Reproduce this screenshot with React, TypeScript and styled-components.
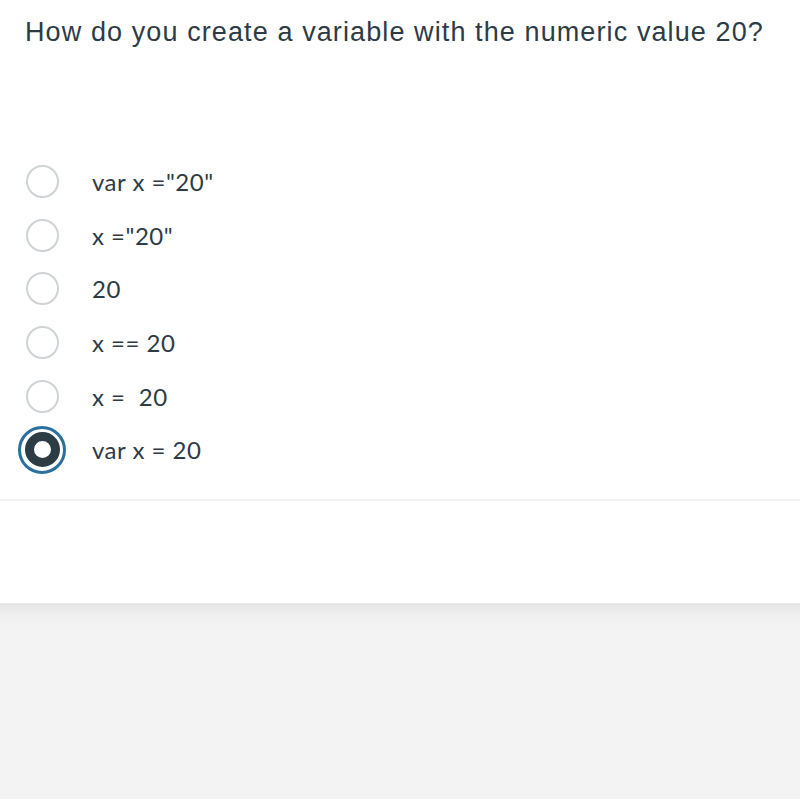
import React from "react";
import styled, { createGlobalStyle } from "styled-components";

const Global = createGlobalStyle`
  html, body { margin: 0; padding: 0; background: #ffffff; }
  body { font-family: "Liberation Sans", Arial, sans-serif; }
`;

const Page = styled.div`
  width: 800px;
  height: 799px;
  display: flex;
  flex-direction: column;
  background: #ffffff;
  overflow: hidden;
`;

const Card = styled.div`
  height: 501px;
  display: flex;
  flex-direction: column;
  border-bottom: 2px solid #f2f2f2;
  box-sizing: border-box;
`;

const Question = styled.h1`
  margin: 0;
  padding: 15px 0 0 25px;
  font-family: "Liberation Sans", Arial, sans-serif;
  font-weight: 400;
  font-size: 27px;
  line-height: 34px;
  color: #2d3b45;
  letter-spacing: 1.1px;
  white-space: nowrap;
`;

const Options = styled.div`
  display: flex;
  flex-direction: column;
  margin-top: 106px;
  padding-left: 18px;
`;

const Row = styled.label`
  display: flex;
  align-items: center;
  height: 53.6px;
`;

const RadioSlot = styled.span`
  width: 48px;
  height: 48px;
  display: flex;
  align-items: center;
  justify-content: center;
  flex-shrink: 0;
`;

const Radio = styled.span<{ $checked: boolean }>`
  box-sizing: border-box;
  width: 33px;
  height: 33px;
  border-radius: 50%;
  border: 2px solid #cfd3d6;
  background: #fff;
  display: flex;
  align-items: center;
  justify-content: center;
  ${(p) =>
    p.$checked &&
    `
    width: 48px;
    height: 48px;
    border: 3px solid #2a6f9e;
    &::after {
      content: "";
      box-sizing: border-box;
      width: 35px;
      height: 35px;
      border-radius: 50%;
      border: 9.5px solid #2d3b45;
      background: #fff;
    }
  `}
`;

const OptionText = styled.span`
  margin-left: 26px;
  font-family: Lato, "Liberation Sans", sans-serif;
  font-size: 24px;
  letter-spacing: 0.5px;
  color: #2d3b45;
  white-space: pre;
`;

const Spacer = styled.div`
  height: 102px;
  background: #ffffff;
`;

const Footer = styled.div`
  flex: 1;
  background: linear-gradient(#e4e4e4 0px, #efefef 10px, #f3f3f3 22px);
  border-top: 1px solid #e8e8e8;
`;

const options = [
  { text: 'var x ="20"', checked: false },
  { text: 'x ="20"', checked: false },
  { text: "20", checked: false },
  { text: "x == 20", checked: false },
  { text: "x =  20", checked: false },
  { text: "var x = 20", checked: true },
];

export default function App() {
  return (
    <Page>
      <Global />
      <Card>
        <Question>How do you create a variable with the numeric value 20?</Question>
        <Options>
          {options.map((o, i) => (
            <Row key={i}>
              <RadioSlot>
                <Radio $checked={o.checked} />
              </RadioSlot>
              <OptionText>{o.text}</OptionText>
            </Row>
          ))}
        </Options>
      </Card>
      <Spacer />
      <Footer />
    </Page>
  );
}
